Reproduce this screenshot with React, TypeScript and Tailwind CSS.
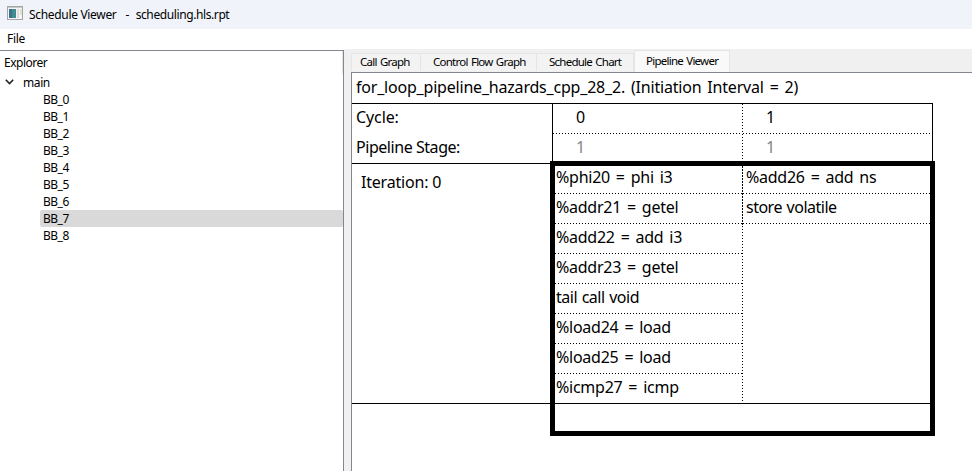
import React from "react";

const blocks = ["BB_0", "BB_1", "BB_2", "BB_3", "BB_4", "BB_5", "BB_6", "BB_7", "BB_8"];
const first = ["%phi20 = phi i3", "%addr21 = getel", "%add22 = add i3", "%addr23 = getel", "tail call void", "%load24 = load", "%load25 = load", "%icmp27 = icmp"];
const second = ["%add26 = add ns", "store volatile"];
const dotsX = "h-px bg-[repeating-linear-gradient(90deg,#000_0_1px,transparent_1px_3px)]";
const dotsY = "w-px bg-[repeating-linear-gradient(180deg,#000_0_1px,transparent_1px_3px)]";
const dashY = "h-[60px] w-px bg-[repeating-linear-gradient(180deg,#000_0_2px,transparent_2px_3px)]";

function Row({ text, pad }: { text: string; pad: string }) {
  const spacing = text.includes("=") ? "tracking-[-0.25px] [word-spacing:2px]" : "tracking-[-0.5px] [word-spacing:1px]";
  return (
    <div className="flex h-[30px] flex-col">
      <div className={"h-[29px] whitespace-pre leading-[26px] " + spacing + " " + pad}>{text}</div>
      <div className={dotsX} />
    </div>
  );
}

export default function App() {
  return (
    <div className="flex h-[471px] w-[972px] flex-col overflow-hidden bg-white [font-family:'Noto_Sans',sans-serif] text-[12px] text-black">
      <header className="flex h-[29px] shrink-0 items-center bg-[#f0f3fa] pl-[7px] tracking-[-0.32px]">
        <svg width="16" height="14" viewBox="0 0 16 14" className="-mt-[3px] shrink-0">
          <rect x=".5" y=".5" width="15" height="13" fill="#f5f5f5" stroke="#a5a5a5" />
          <path d="M1 1.5h14" stroke="#c8c8c8" />
          <rect x="2" y="3" width="7" height="9" fill="#3f8e8d" />
          <rect x="2" y="3" width="3" height="9" fill="#3c7196" />
          <rect x="10" y="3" width="2" height="9" fill="#ddd" />
          <rect x="13" y="3" width="2" height="6" fill="#e5e0d0" />
        </svg>
        <span className="ml-[6px] whitespace-pre">Schedule Viewer</span>
        <span className="ml-[9px] whitespace-pre">-  <span className="ml-px tracking-[-0.4px]">scheduling.hls.rpt</span></span>
      </header>
      <nav className="h-[20px] shrink-0 pl-[7px] leading-[20px] tracking-[-0.3px]">File</nav>
      <main className="flex min-h-0 flex-1">
        <aside className="mt-px flex w-[344px] shrink-0 flex-col border-r border-t border-[#828790] tracking-[-0.5px]">
          <div className="h-[23px] border-r border-[#e5e5e5] pl-[4px] leading-[24px]">Explorer</div>
          <div className="flex h-[17px] items-center pl-[5px]">
            <svg width="9" height="6" viewBox="0 0 9 6" fill="none" stroke="#222" strokeWidth="1.6" className="-mt-[2px]"><path d="M.8 .8L4.5 4.5L8.2 .8" /></svg>
            <span className="ml-[9px] tracking-[-0.4px]">main</span>
          </div>
          {blocks.map((b) => (
            <div key={b} className={b === "BB_7" ? "ml-[40px] h-[17px] rounded-[2px] bg-[#d9d9d9] pl-[3px] leading-[17px]" : "ml-[40px] h-[17px] pl-[3px] leading-[17px]"}>{b}</div>
          ))}
        </aside>
        <section className="flex min-w-0 flex-1 flex-col bg-[#f0f0f0] pl-[7px]">
          <div className="flex h-[23px] items-end text-[11.5px] tracking-[-0.75px] [word-spacing:1px]">
            <div className="mb-px h-[18px] w-[70px] border border-b-0 border-[#e5e5e5] bg-[#f3f3f3] pl-[8px] leading-[16px]">Call Graph</div>
            <div className="mb-px h-[18px] w-[116px] border border-b-0 border-l-0 border-[#e5e5e5] bg-[#f3f3f3] pl-[12px] leading-[16px]">Control Flow Graph</div>
            <div className="mb-px h-[18px] w-[97px] border border-b-0 border-l-0 border-[#e5e5e5] bg-[#f3f3f3] pl-[12px] leading-[16px]">Schedule Chart</div>
            <div className="h-[22px] w-[96px] border border-b-0 border-[#e5e5e5] bg-[#f9f9f9] pl-[11px] leading-[20px]">Pipeline Viewer</div>
          </div>
          <div className="flex-1 border-l border-t border-[#828790] bg-white text-[16px]">
            <div className="h-[30px] whitespace-pre pl-[4px] leading-[29px] tracking-[-0.2px] [word-spacing:2px]">for_loop_pipeline_hazards_cpp_28_2. (Initiation Interval = 2)</div>
            <div className="flex h-[60px] w-[581px] border-r border-t border-black">
              <div className="w-[201px] border-r border-black pl-[4px] leading-[30px] tracking-[-0.45px]"><div className="-mt-[2px] tracking-[-0.1px]">Cycle:</div><div>Pipeline Stage:</div></div>
              <div className="w-[189px]"><div className="h-[29px] pl-[23px] leading-[26px]">0</div><div className={dotsX} /><div className="pl-[23px] leading-[26px] text-[#858585]">1</div></div>
              <div className={dotsY} />
              <div className="flex-1"><div className="h-[29px] pl-[23px] leading-[26px]">1</div><div className={dotsX} /><div className="pl-[23px] leading-[26px] text-[#858585]">1</div></div>
            </div>
            <div className="flex h-[273px]">
              <div className="h-[241px] w-[198px] border-y border-black pl-[9px] leading-[36px] tracking-[-0.2px]">Iteration: 0</div>
              <div className="-mt-[2px] h-[275px] w-[385px] border-[5px] border-black">
                <div className="flex h-[238px] border-b border-black">
                  <div className="-mt-[2px] w-[187px]">{first.map((t) => <Row key={t} text={t} pad="pl-px" />)}</div>
                  <div className="flex flex-col"><div className={dashY} /><div className={"flex-1 " + dotsY} /></div>
                  <div className="-mt-[2px] flex-1">{second.map((t) => <Row key={t} text={t} pad="pl-[3px]" />)}</div>
                </div>
              </div>
            </div>
          </div>
        </section>
      </main>
    </div>
  );
}
